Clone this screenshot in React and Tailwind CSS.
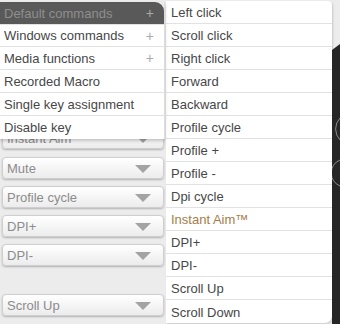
import React from "react";

const leftItems = [
  { label: "Windows commands", plus: true },
  { label: "Media functions", plus: true },
  { label: "Recorded Macro" },
  { label: "Single key assignment" },
  { label: "Disable key" },
];

const rightItems = [
  "Left click",
  "Scroll click",
  "Right click",
  "Forward",
  "Backward",
  "Profile cycle",
  "Profile +",
  "Profile -",
  "Dpi cycle",
  "Instant Aim™",
  "DPI+",
  "DPI-",
  "Scroll Up",
  "Scroll Down",
];

function Dropdown({ label, className = "" }) {
  return (
    <div
      className={`h-[22px] w-[162px] ml-[2px] flex items-center justify-between pl-[4px] pr-[12px] pt-[1px] rounded-[4px] border border-[#cfcfcf] bg-gradient-to-b from-[#ffffff] to-[#ececec] shadow-[0_1px_2px_rgba(0,0,0,0.25)] text-[13px] text-[#8c8c8c] ${className}`}
    >
      <span>{label}</span>
      <svg width="16" height="8" viewBox="0 0 16 8">
        <polygon points="0,0 16,0 8,8" fill="#a3a3a3" />
      </svg>
    </div>
  );
}

export default function App() {
  return (
    <div
      className="w-[340px] h-[324px] flex bg-[#ececec] overflow-hidden"
      style={{ fontFamily: '"Liberation Sans", Arial, sans-serif' }}
    >
      {/* Left column */}
      <div className="relative w-[166px] h-full">
        <div className="flex flex-col pt-[127px]">
          <Dropdown label="Instant Aim" />
          <Dropdown label="Mute" className="mt-[8px]" />
          <Dropdown label="Profile cycle" className="mt-[7px]" />
          <Dropdown label="DPI+" className="mt-[7px]" />
          <Dropdown label="DPI-" className="mt-[7px]" />
          <Dropdown label="Scroll Up" className="mt-[28px]" />
        </div>

        {/* Popup menu */}
        <div className="absolute left-0 top-[2px] w-[165px] flex flex-col shadow-[0_2px_3px_rgba(0,0,0,0.2)] border-r border-[#dcdcdc]">
          <div className="h-[22px] flex items-center justify-between pl-[4px] pr-[10px] pt-[1px] bg-[#595959] rounded-tr-[9px] text-[13px] text-[#8f8f8f]">
            <span>Default commands</span>
            <span className="text-[#a8a8a8] text-[14px]">+</span>
          </div>
          {leftItems.map((it, i) => (
            <div
              key={it.label}
              className={`h-[23px] flex items-center justify-between pl-[4px] pr-[10px] pt-[1px] bg-white text-[13px] text-[#474747] ${
                i < leftItems.length - 1 ? "border-b border-[#e2e2e2]" : ""
              } ${i === 0 ? "border-t border-[#e2e2e2]" : ""}`}
            >
              <span>{it.label}</span>
              {it.plus && <span className="text-[#ababab] text-[14px]">+</span>}
            </div>
          ))}
        </div>
      </div>

      {/* Right menu */}
      <div className="w-[166px] h-full pt-[1px]">
        <div className="flex flex-col bg-white rounded-tr-[4px] rounded-br-[7px] shadow-[1px_1px_2px_rgba(0,0,0,0.15)]">
          {rightItems.map((label, i) => (
            <div
              key={label}
              className={`h-[23px] flex items-center pl-[5px] pt-[2px] text-[13px] ${
                label === "Instant Aim™" ? "text-[#a87c48]" : "text-[#474747]"
              } ${i < rightItems.length - 1 ? "border-b border-[#e2e2e2]" : ""}`}
            >
              {label}
            </div>
          ))}
        </div>
      </div>

      {/* Right strip: mouse picture */}
      <div className="w-[8px] h-full">
        <svg width="8" height="324" viewBox="0 0 8 324">
          <polygon points="0,50 8,44 8,324 0,324" fill="#262626" />
          <path d="M8,118 A16,16 0 0 0 8,140" stroke="#8a8a8a" strokeWidth="1" fill="none" />
          <path d="M8,160 A14,14 0 0 0 8,186" stroke="#8a8a8a" strokeWidth="1" fill="none" />
        </svg>
      </div>
    </div>
  );
}
